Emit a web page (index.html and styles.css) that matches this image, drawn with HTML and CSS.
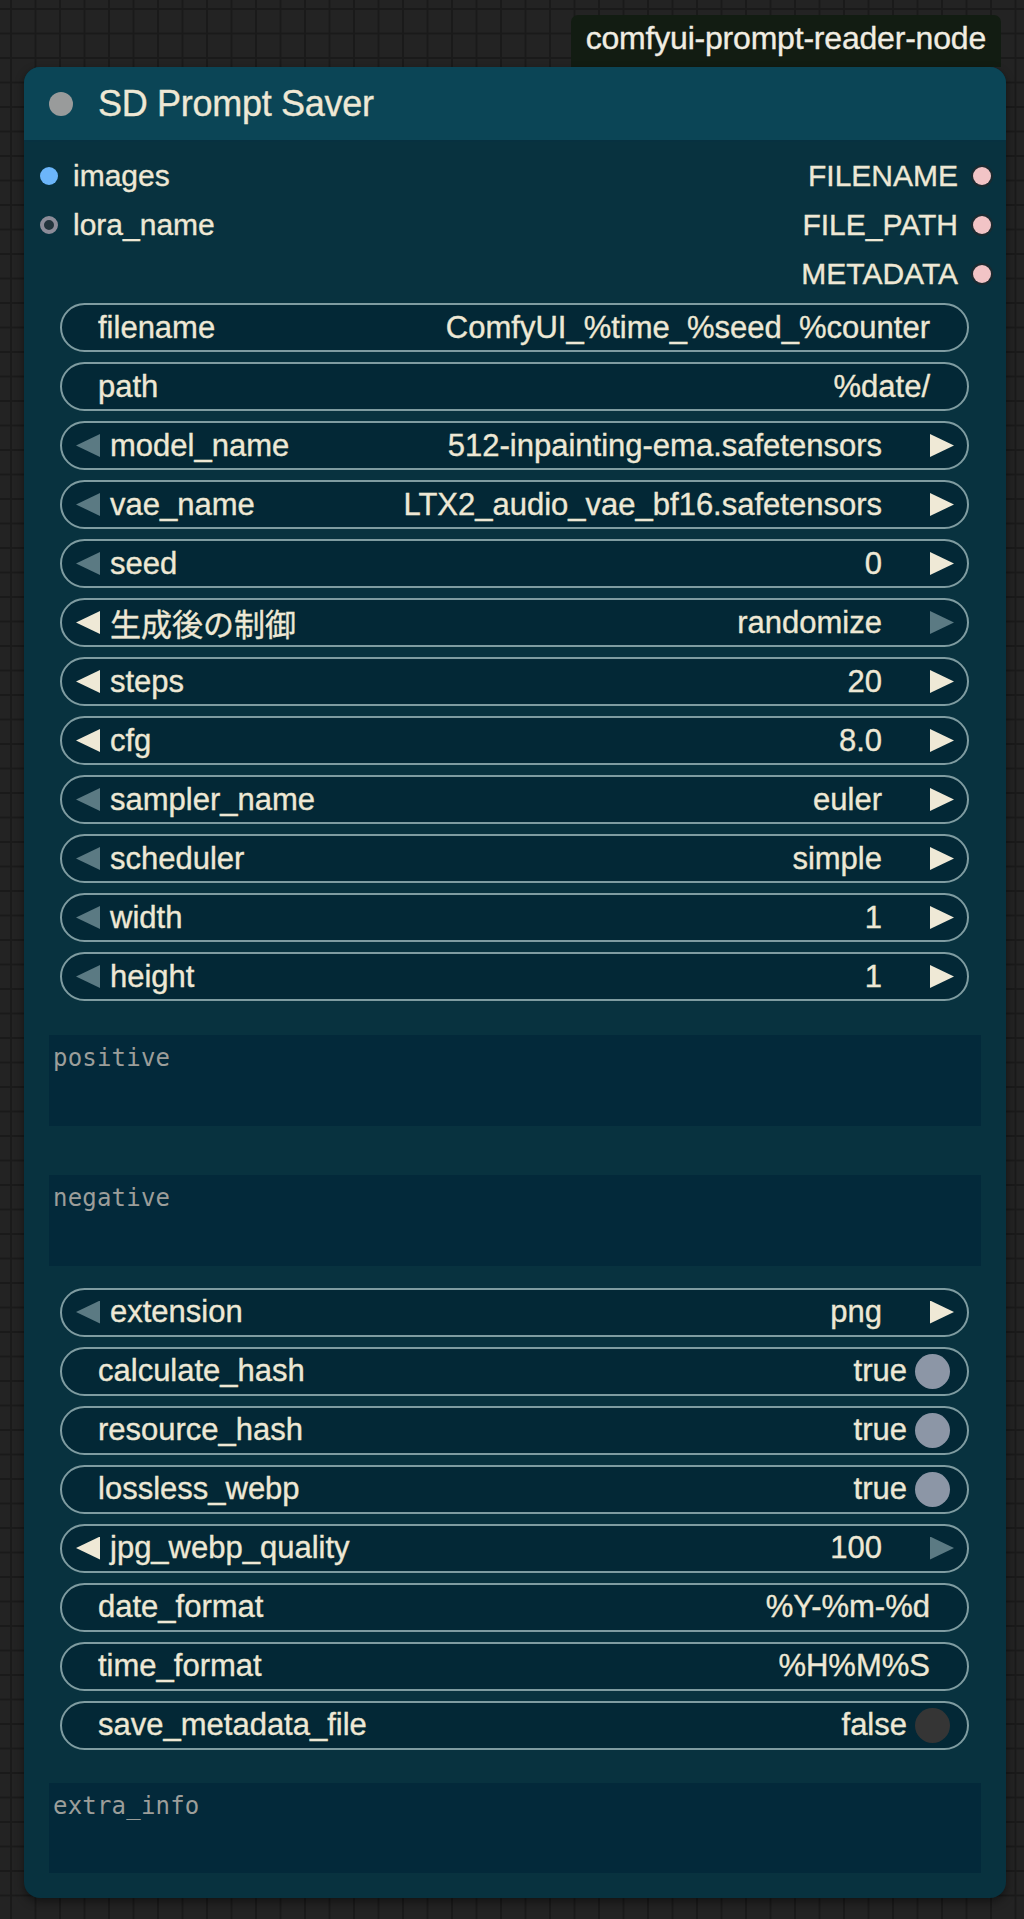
FILE: index.html
```html
<!DOCTYPE html>
<html lang="en">
<head>
<meta charset="utf-8">
<title>SD Prompt Saver</title>
<link rel="stylesheet" href="styles.css">
</head>
<body>
<div class="canvas">
  <div class="tag-row"><div class="tag">comfyui-prompt-reader-node</div></div>
  <div class="node">
    <div class="header"><span class="title-dot"></span><span class="title">SD Prompt Saver</span></div>
    <div class="body">
      <div class="slots">
        <div class="slot-row">
          <div class="slot-in"><span class="dot dot-blue"></span><span>images</span></div>
          <div class="slot-out"><span>FILENAME</span><span class="dot dot-pink"></span></div>
        </div>
        <div class="slot-row">
          <div class="slot-in"><span class="dot dot-ring"></span><span>lora_name</span></div>
          <div class="slot-out"><span>FILE_PATH</span><span class="dot dot-pink"></span></div>
        </div>
        <div class="slot-row">
          <div class="slot-in"></div>
          <div class="slot-out"><span>METADATA</span><span class="dot dot-pink"></span></div>
        </div>
      </div>

      <div class="widgets first-group">
        <div class="widget text"><span class="label">filename</span><span class="value">ComfyUI_%time_%seed_%counter</span></div>
        <div class="widget text"><span class="label">path</span><span class="value">%date/</span></div>
        <div class="widget combo"><span class="arrow left dim"></span><span class="label">model_name</span><span class="value">512-inpainting-ema.safetensors</span><span class="arrow right"></span></div>
        <div class="widget combo"><span class="arrow left dim"></span><span class="label">vae_name</span><span class="value">LTX2_audio_vae_bf16.safetensors</span><span class="arrow right"></span></div>
        <div class="widget combo"><span class="arrow left dim"></span><span class="label">seed</span><span class="value">0</span><span class="arrow right"></span></div>
        <div class="widget combo"><span class="arrow left"></span><span class="label jp">生成後の制御</span><span class="value">randomize</span><span class="arrow right dim"></span></div>
        <div class="widget combo"><span class="arrow left"></span><span class="label">steps</span><span class="value">20</span><span class="arrow right"></span></div>
        <div class="widget combo"><span class="arrow left"></span><span class="label">cfg</span><span class="value">8.0</span><span class="arrow right"></span></div>
        <div class="widget combo"><span class="arrow left dim"></span><span class="label">sampler_name</span><span class="value">euler</span><span class="arrow right"></span></div>
        <div class="widget combo"><span class="arrow left dim"></span><span class="label">scheduler</span><span class="value">simple</span><span class="arrow right"></span></div>
        <div class="widget combo"><span class="arrow left dim"></span><span class="label">width</span><span class="value">1</span><span class="arrow right"></span></div>
        <div class="widget combo"><span class="arrow left dim"></span><span class="label">height</span><span class="value">1</span><span class="arrow right"></span></div>
      </div>

      <div class="textbox tb-positive">positive</div>
      <div class="textbox tb-negative">negative</div>

      <div class="widgets second-group">
        <div class="widget combo"><span class="arrow left dim"></span><span class="label">extension</span><span class="value">png</span><span class="arrow right"></span></div>
        <div class="widget toggle"><span class="label">calculate_hash</span><span class="value">true</span><span class="knob on"></span></div>
        <div class="widget toggle"><span class="label">resource_hash</span><span class="value">true</span><span class="knob on"></span></div>
        <div class="widget toggle"><span class="label">lossless_webp</span><span class="value">true</span><span class="knob on"></span></div>
        <div class="widget combo"><span class="arrow left"></span><span class="label">jpg_webp_quality</span><span class="value">100</span><span class="arrow right dim"></span></div>
        <div class="widget text"><span class="label">date_format</span><span class="value">%Y-%m-%d</span></div>
        <div class="widget text"><span class="label">time_format</span><span class="value">%H%M%S</span></div>
        <div class="widget toggle"><span class="label">save_metadata_file</span><span class="value">false</span><span class="knob off"></span></div>
      </div>

      <div class="textbox tb-extra">extra_info</div>
    </div>
  </div>
</div>
</body>
</html>
```

FILE: styles.css
```css
* { box-sizing: border-box; }

html, body {
  margin: 0;
  padding: 0;
}

body {
  width: 1024px;
  height: 1919px;
  overflow: hidden;
  background-color: #232323;
  background-image:
    linear-gradient(#1a1a1a 2px, transparent 2px),
    linear-gradient(90deg, #1a1a1a 2px, transparent 2px);
  background-size: 24.5px 24.5px;
  background-position: 10px 8px;
  font-family: "Liberation Sans", Arial, "Noto Sans CJK JP", sans-serif;
  color: #eee8d5;
  -webkit-text-stroke: 0.35px currentColor;
}

.canvas {
  display: flex;
  flex-direction: column;
  padding-top: 15px;
}

.tag-row {
  display: flex;
  justify-content: flex-end;
  padding-right: 23px;
}

.tag {
  height: 52px;
  padding: 0 15px 6px 15px;
  display: flex;
  align-items: center;
  background: #121c12;
  border-radius: 7px 7px 0 0;
  font-size: 32px;
  color: #f1ede2;
  letter-spacing: -0.2px;
}

.node {
  margin-left: 24px;
  width: 982px;
  border-radius: 16px;
  background: #08323f;
  box-shadow: 0 4px 10px rgba(0, 0, 0, 0.45);
  overflow: hidden;
}

.header {
  height: 75px;
  background: #0b4556;
  border-bottom: 2px solid #073140;
  display: flex;
  align-items: center;
  padding-left: 25px;
}

.title-dot {
  width: 24px;
  height: 24px;
  border-radius: 50%;
  background: #999b9b;
  margin-right: 25px;
  flex: none;
}

.title {
  font-size: 36px;
  color: #eee8d5;
  letter-spacing: -0.3px;
}

.body {
  padding: 9px 0 25px 0;
  display: flex;
  flex-direction: column;
}

.slots {
  display: flex;
  flex-direction: column;
}

.slot-row {
  height: 49px;
  display: flex;
  align-items: center;
  justify-content: space-between;
  font-size: 30px;
}

.slot-in {
  display: flex;
  align-items: center;
  padding-left: 16px;
}

.slot-in .dot { margin-right: 15px; }

.slot-out {
  display: flex;
  align-items: center;
  padding-right: 15px;
}

.slot-out .dot { margin-left: 15px; }

.dot {
  width: 18px;
  height: 18px;
  border-radius: 50%;
  flex: none;
}

.dot-blue { background: #6cb6fa; }

.dot-ring {
  background: #23343c;
  border: 4px solid #8c8c98;
}

.dot-pink {
  background: #f2c4c6;
  box-shadow: 0 0 0 2px #1c2a30;
}

.widgets {
  display: flex;
  flex-direction: column;
  gap: 10px;
  margin-left: 36px;
  width: 909px;
}

.first-group { margin-top: 5px; }
.second-group { margin-top: 21.5px; }

.widget {
  height: 49px;
  border: 2px solid #7f9ca1;
  border-radius: 25px;
  background: #032836;
  display: flex;
  align-items: center;
  font-size: 31px;
  color: #eee8d5;
  white-space: nowrap;
}

.widget .value {
  margin-left: auto;
}

.widget.text {
  padding: 0 37px 0 36px;
}

.widget.combo {
  padding: 0 13px 0 14px;
}

.widget.combo .value { margin-right: 48px; }

.widget.toggle {
  padding: 0 17px 0 36px;
}

.arrow {
  width: 24px;
  height: 23px;
  flex: none;
  background: #efe9d6;
}

.arrow.left {
  clip-path: polygon(100% 0, 0 50%, 100% 100%);
  margin-right: 10px;
}

.arrow.right {
  clip-path: polygon(0 0, 100% 50%, 0 100%);
}

.arrow.dim { background: #5b7a83; }

.knob {
  width: 35px;
  height: 35px;
  border-radius: 50%;
  flex: none;
  margin-left: 8px;
}

.knob.on { background: #8c96a6; }
.knob.off { background: #353535; }

.textbox {
  margin-left: 25px;
  width: 932px;
  height: 91px;
  background: #03293a;
  font-family: "DejaVu Sans Mono", "Liberation Mono", monospace;
  font-size: 24px;
  color: #9c9e9a;
  padding: 9px 4px;
  letter-spacing: 0.2px;
  -webkit-text-stroke: 0;
}

.tb-positive { margin-top: 33.5px; }
.tb-negative { margin-top: 49.5px; }
.tb-extra { margin-top: 33.5px; height: 90px; }
```
